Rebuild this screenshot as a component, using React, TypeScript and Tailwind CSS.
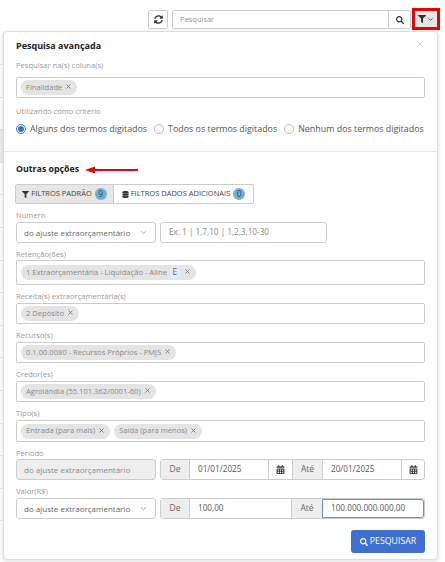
import { ChevronDown, X } from "lucide-react";
import { FaCalendarAlt, FaDatabase, FaFilter, FaSearch, FaSyncAlt } from "react-icons/fa";

const tableRows = Array.from({ length: 15 }, (_, i) => i);

const Chip = ({ label, badge }: { label: string; badge?: string }) => (
  <span className="inline-flex h-[15px] items-center whitespace-nowrap rounded-full bg-[#e4e4e4] pl-[5px] pr-[5px] text-[7.6px] text-[#888]">
    {label}
    {badge && <span className="ml-[2px] flex h-[12px] w-[12px] items-center justify-center rounded-full bg-[#e0ecf7] text-[8.5px] text-[#666]">{badge}</span>}
    <X className="ml-[3px] mb-[2px] h-[7px] w-[7px] text-[#777]" strokeWidth={3} />
  </span>
);

const Label = ({ children, className = "" }: { children: string; className?: string }) => (
  <div className={`text-[7.6px] leading-[11px] text-[#999] ${className}`}>{children}</div>
);

const ChipBox = ({ className, children }: { className: string; children: React.ReactNode }) => (
  <div className={`flex w-[409px] items-center gap-[4px] rounded-[2px] border border-[#ccc] bg-white pl-[4px] ${className}`}>{children}</div>
);

const Radio = ({ label, on }: { label: string; on?: boolean }) => (
  <span className="flex items-center gap-[4px] whitespace-nowrap">
    <span className={`flex h-[10px] w-[10px] items-center justify-center rounded-full border ${on ? "border-[#3b71ca]" : "border-[#bbb]"}`}>
      {on && <span className="h-[6px] w-[6px] rounded-full bg-[#3b71ca]" />}
    </span>
    {label}
  </span>
);

const Addon = ({ children, w }: { children: string; w: string }) => (
  <span className={`flex h-full ${w} shrink-0 items-center justify-center bg-[#eee] text-[8.5px] text-[#666]`}>{children}</span>
);

const Select = () => (
  <div className="flex h-[21px] w-[140px] shrink-0 items-center justify-between whitespace-nowrap rounded-[3px] border border-[#ccc] bg-white pl-[7px] pr-[7px] text-[8px] text-[#666]">
    do ajuste extraorçamentário
    <ChevronDown className="h-[9px] w-[9px] text-[#888]" strokeWidth={2} />
  </div>
);

export default function App() {
  return (
    <div className="relative h-[562px] w-[445px] overflow-hidden bg-white font-['Open_Sans',sans-serif]">
      {/* Table rows behind the popover, only a sliver shows on the left */}
      <div className="absolute left-0 top-[64px] w-[3px]">
        {tableRows.map(i => (
          <div key={i} className={`h-[32.6px] border-t border-[#e4e4e4] ${i === 2 ? "bg-[#eee]" : ""}`} />
        ))}
      </div>

      {/* Toolbar */}
      <div className="flex h-[31px] items-start pt-[10px] pl-[148px]">
        <button className="flex h-[19px] w-[20px] items-center justify-center rounded-[2px] border border-[#ccc] bg-white text-[#333]">
          <FaSyncAlt className="h-[9px] w-[9px]" />
        </button>
        <div className="ml-[4px] flex h-[19px] w-[239px] items-center rounded-[2px] border border-[#ccc] bg-white">
          <span className="flex-1 pl-[7px] text-[7.5px] text-[#999]">Pesquisar</span>
          <span className="flex h-full w-[22px] items-center justify-center border-l border-[#ccc]">
            <FaSearch className="h-[8px] w-[8px] text-[#333]" />
          </span>
        </div>
        <button className="-mt-[2px] ml-[1px] flex h-[22px] w-[28px] items-center justify-center gap-[1px] border-[3px] border-[#e00] bg-[#e6e6e6] text-[#333]">
          <FaFilter className="h-[8px] w-[8px]" />
          <ChevronDown className="h-[7px] w-[7px]" strokeWidth={3} />
        </button>
      </div>

      {/* Popover */}
      <div className="relative ml-[3px] h-[529px] w-[435px] rounded-[4px] border border-[#ddd] bg-white shadow-[0_1px_4px_rgba(0,0,0,0.15)]">
        <X className="absolute right-[13px] top-[8px] h-[8px] w-[8px] text-[#ccc]" strokeWidth={3} />
        <div className="px-[12px] pt-[7px]">
          <div className="text-[9px] font-bold leading-[14px] text-[#222]">Pesquisa avançada</div>
          <Label className="mt-[7px]">Pesquisar na(s) coluna(s)</Label>
          <div className="mt-[6px] flex h-[21px] w-[409px] items-center rounded-[2px] border border-[#ccc] pl-[4px]">
            <Chip label="Finalidade" />
          </div>
          <Label className="mt-[8px]">Utilizando como critério</Label>
          <div className="mt-[5px] flex h-[14px] items-center gap-[7px] text-[8.9px] text-[#555]">
            <Radio label="Alguns dos termos digitados" on />
            <Radio label="Todos os termos digitados" />
            <Radio label="Nenhum dos termos digitados" />
          </div>
        </div>
        <div className="mt-[15px] border-t border-[#e5e5e5] px-[12px] pt-[11px]">
          <div className="flex h-[14px] items-center">
            <span className="text-[8.8px] font-bold text-[#222]">Outras opções</span>
            <svg className="ml-[6px]" width="54" height="8" viewBox="0 0 54 8">
              <path d="M0 4 L10 0.5 L10 3 L53 3 L53 5 L10 5 L10 7.5 Z" fill="#e8000a" />
            </svg>
          </div>
          <div className="-ml-[1px] mt-[7px] flex h-[20px] w-[239px] rounded-[2px] border border-[#ccc] text-[7.5px] text-[#444]">
            <div className="flex w-[97px] items-center justify-center gap-[2px] whitespace-nowrap bg-[#e6e6e6]">
              <FaFilter className="h-[7px] w-[7px] text-[#333]" />
              FILTROS PADRÃO
              <span className="ml-[1px] flex h-[12px] w-[12px] items-center justify-center rounded-full bg-[#6cb2da] text-[8.5px]">9</span>
            </div>
            <div className="flex flex-1 items-center justify-center gap-[2px] whitespace-nowrap border-l border-[#ccc]">
              <FaDatabase className="h-[7px] w-[7px] text-[#333]" />
              FILTROS DADOS ADICIONAIS
              <span className="ml-[1px] flex h-[12px] w-[12px] items-center justify-center rounded-full bg-[#6cb2da] text-[8.5px]">0</span>
            </div>
          </div>
          <Label className="mt-[6px]">Número</Label>
          <div className="mt-[1px] flex gap-[4px]">
            <Select />
            <div className="flex h-[21px] w-[167px] items-center rounded-[3px] border border-[#ccc] pl-[8px] text-[8.2px] text-[#888]">Ex: 1 | 1,7,10 | 1,2,3,10-30</div>
          </div>
          <Label className="mt-[6px]">Retenção(ões)</Label>
          <ChipBox className="h-[25px]"><Chip label="1 Extraorçamentária - Liquidação - Aline" badge="E" /></ChipBox>
          <Label className="mt-[6px]">Receita(s) extraorçamentária(s)</Label>
          <ChipBox className="mt-[1px] h-[21px]"><Chip label="2 Depósito" /></ChipBox>
          <Label className="mt-[6px]">Recurso(s)</Label>
          <ChipBox className="mt-[1px] h-[21px]"><Chip label="0.1.00.0080 - Recursos Próprios - PMJS" /></ChipBox>
          <Label className="mt-[6px]">Credor(es)</Label>
          <ChipBox className="mt-[1px] h-[21px]"><Chip label="Agrolândia (55.101.362/0001-60)" /></ChipBox>
          <Label className="mt-[6px]">Tipo(s)</Label>
          <ChipBox className="mt-[1px] h-[22px]">
            <Chip label="Entrada (para mais)" />
            <Chip label="Saída (para menos)" />
          </ChipBox>
          <Label className="mt-[6px]">Período</Label>
          <div className="flex gap-[4px]">
            <div className="flex h-[21px] w-[140px] shrink-0 items-center whitespace-nowrap rounded-[3px] border border-[#ccc] bg-[#eee] pl-[7px] text-[8px] text-[#888]">do ajuste extraorçamentário</div>
            <div className="flex h-[21px] w-[266px] items-center overflow-hidden rounded-[3px] border border-[#ccc] text-[8.2px] text-[#555]">
              <Addon w="w-[28px]">De</Addon>
              <span className="flex h-full w-[79px] items-center border-l border-[#ccc] pl-[8px]">01/01/2025</span>
              <span className="flex h-full w-[25px] items-center justify-center border-x border-[#ccc]"><FaCalendarAlt className="h-[9px] w-[9px] text-[#444]" /></span>
              <Addon w="w-[29px]">Até</Addon>
              <span className="flex h-full w-[79px] items-center border-l border-[#ccc] pl-[8px]">20/01/2025</span>
              <span className="flex h-full flex-1 items-center justify-center border-l border-[#ccc]"><FaCalendarAlt className="h-[9px] w-[9px] text-[#444]" /></span>
            </div>
          </div>
          <Label className="mt-[6px]">Valor(R$)</Label>
          <div className="mt-[1px] flex gap-[4px]">
            <Select />
            <div className="flex h-[21px] w-[265px] items-center overflow-hidden rounded-[3px] border border-[#ccc] text-[8.2px] text-[#555]">
              <Addon w="w-[28px]">De</Addon>
              <span className="flex h-full w-[103px] items-center border-x border-[#ccc] pl-[8px]">100,00</span>
              <Addon w="w-[30px]">Até</Addon>
              <span className="flex h-full flex-1 items-center rounded-r-[3px] border border-[#5b8ee6] pl-[8px]">100.000.000.000,00</span>
            </div>
          </div>
          <div className="mt-[11px] flex w-[409px] justify-end">
            <button className="flex h-[23px] w-[74px] items-center justify-center gap-[2px] rounded-[3px] bg-[#3f6fd1] text-[8.8px] text-white">
              <FaSearch className="h-[8px] w-[8px]" />
              PESQUISAR
            </button>
          </div>
        </div>
      </div>
    </div>
  );
}
